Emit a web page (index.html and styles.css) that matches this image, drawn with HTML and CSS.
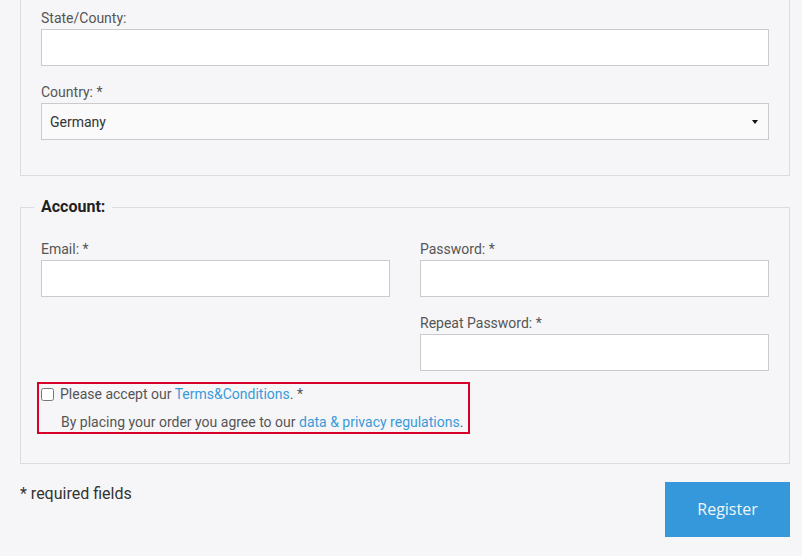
FILE: index.html
```html
<!DOCTYPE html>
<html lang="en">
<head>
<meta charset="utf-8">
<title>Register</title>
<link rel="stylesheet" href="styles.css">
</head>
<body>
<form class="page">
  <fieldset class="box box-continued">
    <div class="field">
      <label class="label">State/County:</label>
      <div class="input"></div>
    </div>
    <div class="field field-last">
      <label class="label">Country: *</label>
      <div class="select"><span>Germany</span><span class="caret"></span></div>
    </div>
  </fieldset>

  <fieldset class="box box-account">
    <legend class="legend">Account:</legend>
    <div class="grid">
      <div class="field">
        <label class="label">Email: *</label>
        <div class="input"></div>
      </div>
      <div class="field">
        <label class="label">Password: *</label>
        <div class="input"></div>
      </div>
      <div class="field field-empty"></div>
      <div class="field field-last">
        <label class="label">Repeat Password: *</label>
        <div class="input"></div>
      </div>
    </div>
    <div class="consent">
      <div class="consent-row">
        <input type="checkbox" class="check">
        <span>Please accept our <a class="link">Terms&amp;Conditions</a>. *</span>
      </div>
      <div class="consent-note">By placing your order you agree to our <a class="link">data &amp; privacy regulations</a>.</div>
    </div>
  </fieldset>

  <div class="footer">
    <span class="required">* required fields</span>
    <button type="button" class="btn">Register</button>
  </div>
</form>
</body>
</html>
```
FILE: styles.css
```css
html, body {
  margin: 0;
  padding: 0;
  background: #f6f6f8;
}
body {
  font-family: Roboto, "Liberation Sans", sans-serif;
  font-size: 14px;
  color: #555;
}
.page {
  width: 770px;
  margin: 0 12px 0 20px;
}
.box {
  margin: 0;
  border: 1px solid #dcdcdf;
  min-inline-size: 0;
  box-sizing: border-box;
}
.box-continued {
  border-top: none;
  padding: 7px 20px 35px 20px;
  margin-bottom: 21px;
}
.box-account {
  padding: 21px 20px 29px 20px;
}
.legend {
  font-weight: bold;
  font-size: 16px;
  line-height: 20px;
  color: #222;
  padding: 0 7px;
  margin-left: -7px;
}
.field {
  display: flex;
  flex-direction: column;
  margin-bottom: 15px;
}
.field-last {
  margin-bottom: 0;
}
.label {
  display: block;
  line-height: 20px;
  padding-top: 1px;
  margin-bottom: 1px;
  color: #555;
}
.input {
  height: 37px;
  box-sizing: border-box;
  border: 1px solid #cbcbcb;
  background: #fff;
}
.select {
  height: 37px;
  box-sizing: border-box;
  border: 1px solid #cbcbcb;
  background: #fafafa;
  display: flex;
  align-items: center;
  justify-content: space-between;
  padding: 0 10px 0 8px;
  color: #333;
}
.caret {
  width: 0;
  height: 0;
  border-left: 3px solid transparent;
  border-right: 3px solid transparent;
  border-top: 4px solid #111;
  margin-top: 1px;
}
.grid {
  display: grid;
  grid-template-columns: 1fr 1fr;
  column-gap: 30px;
}
.consent {
  display: inline-flex;
  flex-direction: column;
  gap: 8px;
  border: 2px solid #d8002a;
  margin: 11px 0 0 -4px;
  padding: 0 5px 0 2px;
}
.consent-row {
  display: flex;
  align-items: center;
  height: 20px;
  line-height: 20px;
}
.check {
  width: 13px;
  height: 13px;
  margin: 0 6px 0 0;
}
.consent-note {
  line-height: 20px;
  padding-left: 20px;
}
.link {
  color: #3a9ad9;
  text-decoration: none;
}
.footer {
  display: flex;
  justify-content: space-between;
  align-items: flex-start;
  margin-top: 18px;
}
.required {
  font-size: 16px;
  line-height: 22px;
  padding-top: 1px;
  color: #333;
}
.btn {
  width: 125px;
  height: 55px;
  border: none;
  background: #3598da;
  color: #eef6fc;
  font-family: "Open Sans", Roboto, sans-serif;
  font-size: 16px;
  padding: 0 0 2px 0;
}
```
